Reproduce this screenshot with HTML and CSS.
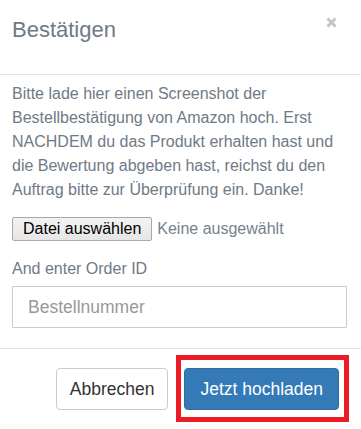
FILE: index.html
```html
<!DOCTYPE html>
<html lang="de">
<head>
    <meta charset="UTF-8">
    <meta name="viewport" content="width=device-width, initial-scale=1.0">
    <title>Bestätigen</title>
    <link rel="stylesheet" href="styles.css">
</head>
<body>
    <div class="modal">
        <div class="modal-header">
            <h4 class="modal-title">Bestätigen</h4>
            <button class="close" type="button" aria-label="Schließen">
                <svg width="11" height="11" viewBox="0 0 11 11">
                    <path d="M1.5 1.5 L9.5 9.5 M9.5 1.5 L1.5 9.5" stroke="#c4c4c4" stroke-width="2.8" stroke-linecap="butt" fill="none"/>
                </svg>
            </button>
        </div>
        <div class="modal-body">
            <p class="intro">Bitte lade hier einen Screenshot der Bestellbestätigung von Amazon hoch. Erst NACHDEM du das Produkt erhalten hast und die Bewertung abgeben hast, reichst du den Auftrag bitte zur Überprüfung ein. Danke!</p>
            <div class="file-row">
                <label class="file-btn" for="screenshot">Datei auswählen</label>
                <input class="file-input" type="file" id="screenshot">
                <span class="file-name">Keine ausgewählt</span>
            </div>
            <p class="label">And enter Order ID</p>
            <input class="form-control" type="text" placeholder="Bestellnummer">
        </div>
        <div class="modal-footer">
            <button class="btn btn-default" type="button">Abbrechen</button>
            <span class="highlight">
                <button class="btn btn-primary" type="button">Jetzt hochladen</button>
            </span>
        </div>
    </div>
</body>
</html>
```

FILE: styles.css
```css
body {
    margin: 0;
    background: #fff;
    font-family: 'Liberation Sans', Arial, sans-serif;
}

.modal {
    width: 361px;
}

.modal-header {
    display: flex;
    justify-content: space-between;
    align-items: flex-start;
    box-sizing: border-box;
    height: 75px;
    padding: 17px 24px 0 12px;
    border-bottom: 1px solid #e5e5e5;
}

.modal-title {
    margin: 0;
    font-size: 22px;
    line-height: 26px;
    font-weight: normal;
    color: #6f7a87;
}

.close {
    padding: 0;
    border: none;
    background: none;
    width: 11px;
    height: 11px;
    cursor: pointer;
}

.close svg {
    display: block;
}

.modal-body {
    padding: 7px 14px 20px 12px;
}

.intro {
    margin: 0;
    font-size: 16px;
    line-height: 24px;
    color: #6f7a87;
}

.file-row {
    display: flex;
    align-items: center;
    margin-top: 15px;
    height: 24px;
}

.file-input {
    display: none;
}

.file-btn {
    box-sizing: border-box;
    height: 24px;
    padding: 0 10px;
    font-size: 16px;
    line-height: 22px;
    color: #000;
    background: linear-gradient(#f3f3f3, #e6e6e6);
    border: 1px solid #a9a9a9;
    border-radius: 2px;
    cursor: pointer;
}

.file-name {
    margin-left: 5px;
    font-size: 16px;
    color: #77818d;
}

.label {
    margin: 16px 0 0;
    font-size: 16px;
    line-height: 24px;
    color: #6f7a87;
}

.form-control {
    display: block;
    box-sizing: border-box;
    width: 335px;
    height: 42px;
    margin-top: 5px;
    padding: 0 15px;
    font-family: inherit;
    font-size: 17.5px;
    color: #555;
    border: 1px solid #ccc;
    border-radius: 1px;
    outline: none;
}

.form-control::placeholder {
    color: #999;
}

.modal-footer {
    display: flex;
    justify-content: flex-end;
    gap: 16px;
    padding: 19px 22px 20px 0;
    border-top: 1px solid #e5e5e5;
}

.btn {
    box-sizing: border-box;
    height: 42px;
    font-family: inherit;
    font-size: 17.5px;
    border-radius: 4px;
    cursor: pointer;
}

.btn-default {
    padding: 0 13px;
    color: #333;
    background: #fff;
    border: 1px solid #ccc;
}

.btn-primary {
    display: block;
    padding: 0 15px;
    color: #fff;
    background: #337ab7;
    border: 1px solid #2e6da4;
}

.highlight {
    position: relative;
    display: block;
}

.highlight::after {
    content: '';
    position: absolute;
    top: -13px;
    bottom: -12px;
    left: -8px;
    right: -10px;
    border: 5px solid #ec1c24;
    pointer-events: none;
}
```
